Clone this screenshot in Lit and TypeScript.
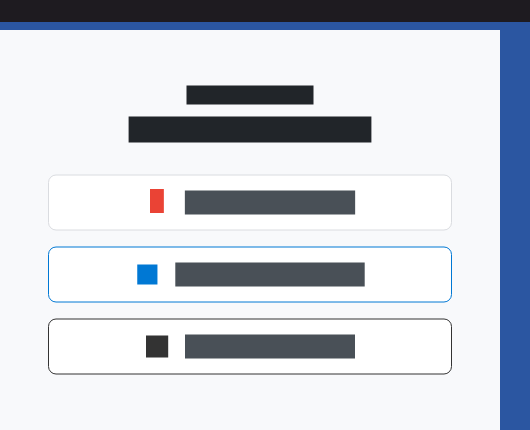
import { LitElement, html, svg, css } from "lit";
import { customElement, property } from "lit/decorators.js";
import { styleMap } from "lit/directives/style-map.js";

// A solid block; its edges may fall between pixels.
interface Block {
  x: number;
  y: number;
  w: number;
  h: number;
  color: string;
}

interface Provider {
  border: string;
  mark: Block;
  label: Block;
}

const INK = "#212529";
const LABEL = "#495057";

// Coordinates of marks and labels are relative to their card.
const providers: Provider[] = [
  {
    border: "#dadce0",
    mark: { x: 102, y: 15, w: 13.85, h: 24, color: "#ea4335" },
    label: { x: 136.85, y: 16.5, w: 170.3, h: 24, color: LABEL },
  },
  {
    border: "#0078d4",
    mark: { x: 89.25, y: 18.5, w: 20.2, h: 20, color: "#0078d4" },
    label: { x: 127.3, y: 16.5, w: 189.4, h: 24, color: LABEL },
  },
  {
    border: "#333333",
    mark: { x: 98, y: 17.5, w: 22.2, h: 22, color: "#333333" },
    label: { x: 137, y: 16.5, w: 170, h: 24, color: LABEL },
  },
];

const rect = (b: Block) =>
  svg`<rect x=${b.x} y=${b.y} width=${b.w} height=${b.h} fill=${b.color}></rect>`;

@customElement("provider-card")
class ProviderCard extends LitElement {
  @property({ attribute: false }) provider!: Provider;

  static styles = css`
    :host { display: block; height: 56px; }
    .card { display: block; width: 100%; height: 100%; overflow: visible; }
  `;

  render() {
    const p = this.provider;
    return html`
      <svg class="card" viewBox="0 0 404 56">
        <rect x="0.5" y="1" width="403" height="55" rx="7.5" fill="#ffffff" stroke=${p.border}></rect>
        ${rect(p.mark)}${rect(p.label)}
      </svg>
    `;
  }
}

@customElement("heading-bar")
class HeadingBar extends LitElement {
  @property({ type: Number }) width = 0;
  @property({ type: Number }) height = 0;

  static styles = css`
    :host { display: block; }
    .bar { display: block; overflow: visible; }
  `;

  render() {
    const box = Math.ceil(this.width / 2) * 2;
    return html`
      <svg class="bar" style=${styleMap({ width: `${box}px`, height: `${this.height}px` })}>
        ${rect({ x: (box - this.width) / 2, y: 0.5, w: this.width, h: this.height, color: INK })}
      </svg>
    `;
  }
}

@customElement("app-root")
class AppRoot extends LitElement {
  static styles = css`
    :host {
      display: flex;
      flex-direction: column;
      height: 430px;
      overflow: hidden;
      background: #2b56a1;
      font-family: "Liberation Sans", sans-serif;
    }
    .topbar { flex: none; height: 22px; background: #1e1b20; }
    .panel {
      flex: 1;
      box-sizing: border-box;
      width: 500px;
      margin-top: 8px;
      padding: 55px 48px 0;
      background: #f8f9fb;
    }
    .headings {
      display: flex;
      flex-direction: column;
      align-items: center;
      gap: 12px;
    }
    .providers {
      display: flex;
      flex-direction: column;
      gap: 16px;
      margin-top: 32px;
    }
  `;

  render() {
    return html`
      <header class="topbar"></header>
      <main class="panel">
        <div class="headings">
          <heading-bar .width=${127} .height=${19}></heading-bar>
          <heading-bar .width=${242.8} .height=${26}></heading-bar>
        </div>
        <div class="providers">
          ${providers.map((p) => html`<provider-card .provider=${p}></provider-card>`)}
        </div>
      </main>
    `;
  }
}
